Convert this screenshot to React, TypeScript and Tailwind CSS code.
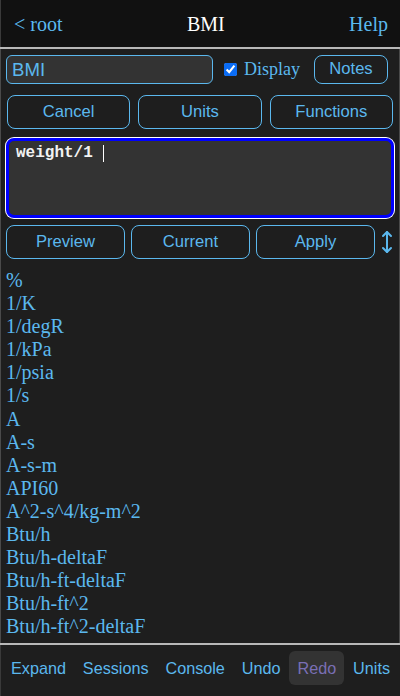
import React from "react";

const units = [
  "%",
  "1/K",
  "1/degR",
  "1/kPa",
  "1/psia",
  "1/s",
  "A",
  "A-s",
  "A-s-m",
  "API60",
  "A^2-s^4/kg-m^2",
  "Btu/h",
  "Btu/h-deltaF",
  "Btu/h-ft-deltaF",
  "Btu/h-ft^2",
  "Btu/h-ft^2-deltaF",
  "Btu/lb",
];

const sans = { fontFamily: '"Liberation Sans", Arial, sans-serif' };
const serif = { fontFamily: '"Liberation Serif", "Times New Roman", serif' };
const mono = { fontFamily: '"Liberation Mono", "Courier New", monospace' };

function Btn({ children, className = "" }: { children: React.ReactNode; className?: string }) {
  return (
    <div
      className={`flex items-center justify-center rounded-[8px] border border-[#5bb8ee] text-[16.6px] text-[#5bb8ee] ${className}`}
      style={sans}
    >
      {children}
    </div>
  );
}

export default function App() {
  return (
    <div className="flex h-[696px] w-[400px] flex-col overflow-hidden bg-[#1e1e1e]">
      <div
        className="flex h-[47px] shrink-0 items-center justify-between border-l border-[#3a3a3a] bg-[#111111] pl-[13px] pr-[12px] text-[20px]"
        style={serif}
      >
        <span className="text-[#5bb8ee]">&lt; root</span>
        <span className="text-white">BMI</span>
        <span className="text-[#5bb8ee]">Help</span>
      </div>
      <div className="h-[2px] shrink-0 bg-[#b8b8b8]" />
      <div className="flex min-h-0 flex-1 flex-col border-x border-[#4a4a4a]">
        <div className="mt-[6px] flex h-[29px] items-center pl-[5px] pr-[11px]">
          <div
            className="flex h-[29px] w-[207px] items-center rounded-[6px] border border-[#5bb8ee] bg-[#333333] pl-[5px] text-[18.6px] text-[#5bb8ee]"
            style={sans}
          >
            BMI
          </div>
          <input
            type="checkbox"
            checked
            readOnly
            className="ml-[11px] h-[13px] w-[13px] accent-[#0a6cf5]"
          />
          <span className="ml-[7px] text-[18px] text-[#5bb8ee]" style={serif}>
            Display
          </span>
          <div className="ml-auto">
            <Btn className="h-[29px] w-[74px]">Notes</Btn>
          </div>
        </div>
        <div className="flex gap-2 pl-[6px] pr-[6px] pt-[11px]">
          <Btn className="h-[34px] flex-1">Cancel</Btn>
          <Btn className="h-[34px] flex-1">Units</Btn>
          <Btn className="h-[34px] flex-1">Functions</Btn>
        </div>
        <div className="px-[5px] pt-[9px]">
          <div className="h-[80px] rounded-[8px] border-[3px] border-[#0000ff] bg-[#333333] px-[7px] pt-[3px] shadow-[0_0_0_1px_#ffffff]">
            <div className="flex items-center text-[16px] font-bold leading-[18px] text-[#f2f2f2]" style={mono}>
              <span>weight/1&nbsp;</span>
              <span className="ml-[1px] inline-block h-[17px] w-[1px] bg-white" />
            </div>
          </div>
        </div>
        <div className="flex items-center gap-[6px] pl-[5px] pt-[7px]">
          <Btn className="h-[34px] w-[119px] shrink-0">Preview</Btn>
          <Btn className="h-[34px] w-[119px] shrink-0">Current</Btn>
          <Btn className="h-[34px] w-[119px] shrink-0">Apply</Btn>
          <svg width="12" height="24" viewBox="0 0 12 24" className="shrink-0" fill="none" stroke="#5bb8ee" strokeWidth="2" strokeLinecap="round" strokeLinejoin="round">
            <path d="M6 2v20" />
            <path d="M2 6l4-4 4 4" />
            <path d="M2 18l4 4 4-4" />
          </svg>
        </div>
        <div className="min-h-0 flex-1 overflow-hidden pl-[5px] pt-[10px]">
          {units.map((u) => (
            <div key={u} className="text-[20px] leading-[23.1px] text-[#5bb8ee]" style={serif}>
              {u}
            </div>
          ))}
        </div>
      </div>
      <div className="h-[2px] shrink-0 bg-[#b8b8b8]" />
      <div
        className="flex h-[51px] shrink-0 items-start justify-between border-l border-[#3a3a3a] bg-[#1e1e1e] px-[2px] pt-[6px] text-[16.2px]"
        style={sans}
      >
        <span className="flex h-[34px] items-center px-2 text-[#5bb8ee]">Expand</span>
        <span className="flex h-[34px] items-center px-2 text-[#5bb8ee]">Sessions</span>
        <span className="flex h-[34px] items-center px-2 text-[#5bb8ee]">Console</span>
        <span className="flex h-[34px] items-center px-2 text-[#5bb8ee]">Undo</span>
        <span className="flex h-[34px] items-center rounded-[6px] bg-[#333333] px-2 text-[#7a6fb5]">Redo</span>
        <span className="flex h-[34px] items-center px-2 text-[#5bb8ee]">Units</span>
      </div>
    </div>
  );
}
